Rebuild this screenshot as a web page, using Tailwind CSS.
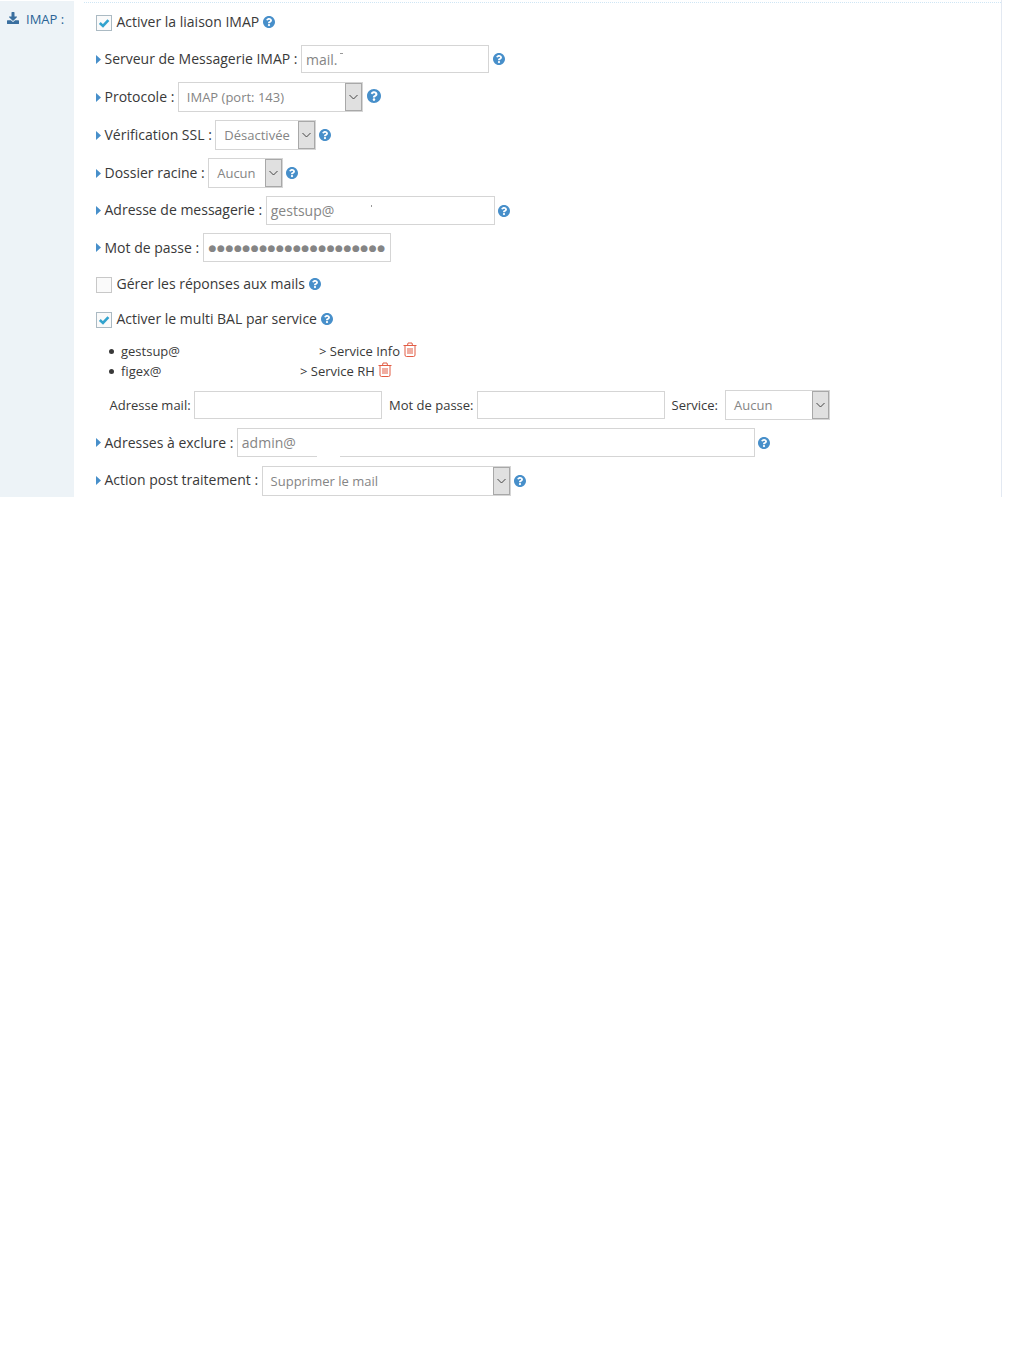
<!DOCTYPE html>
<html lang="fr">
<head>
<meta charset="utf-8">
<title>IMAP</title>
<script src="https://cdn.jsdelivr.net/npm/@tailwindcss/browser@4"></script>
</head>
<body class="bg-white font-['Open_Sans',sans-serif] text-[14px] text-[#393939]">
<div class="flex h-[497px] w-[1002px] overflow-hidden">
  <aside class="w-[74px] shrink-0 bg-[#edf3f7] pt-[11px] pl-[7px] flex items-start gap-[7px] text-[#2a6496] text-[13px] leading-[15px] border-t border-white">
    <svg class="w-[12px] h-[12px] mt-[0px] fill-[#3a6f9f]" viewBox="0 0 512 512"><path d="M216 0h80c13.3 0 24 10.7 24 24v168h87.7c17.8 0 26.7 21.5 14.1 34.1L269.7 378.3c-7.5 7.5-19.8 7.5-27.3 0L90.1 226.1c-12.6-12.6-3.7-34.1 14.1-34.1H192V24c0-13.3 10.7-24 24-24zm296 376v112c0 13.3-10.7 24-24 24H24c-13.3 0-24-10.7-24-24V376c0-13.3 10.7-24 24-24h146.7l49 49c20.1 20.1 52.5 20.1 72.6 0l49-49H488c13.3 0 24 10.7 24 24z"/></svg>
    <span>IMAP :</span>
  </aside>
  <main class="flex-1 pl-[10px] border-r border-[#e3e9f2]">
    <div class="h-[8px] border-t border-dotted border-[#cfe6f5] mt-[2px] -mb-[2px]"></div>
    <div class="pl-[12px] flex flex-col">
      <!-- checkbox -->
      <div class="h-[28px] flex items-center">
        <span class="w-[16px] h-[16px] mr-[4.5px] mt-[1px] border border-[#abbac3] bg-[#fafafa] flex items-center justify-center"><svg class="w-[12px] h-[12px]" viewBox="0 0 12 12"><path d="M1.8 6 L5 9 L10.4 3.2" fill="none" stroke="#32a3ce" stroke-width="2.6"/></svg></span>
        <span class="pb-[2px]">Activer la liaison IMAP</span>
        <svg class="w-[12px] h-[12px] ml-[4px] fill-[#478fca]" viewBox="8 8 496 496"><path d="M504 256c0 136.997-111.043 248-248 248S8 392.997 8 256C8 119.083 119.043 8 256 8s248 111.083 248 248zM262.655 90c-54.497 0-89.255 22.957-116.549 63.758-3.536 5.286-2.353 12.415 2.715 16.258l34.699 26.31c5.205 3.947 12.621 3.008 16.665-2.122 17.864-22.658 30.113-35.797 57.303-35.797 20.429 0 45.698 13.148 45.698 32.958 0 14.976-12.363 22.667-32.534 33.976C247.128 238.528 216 254.941 216 296v4c0 6.627 5.373 12 12 12h56c6.627 0 12-5.373 12-12v-1.333c0-28.462 83.186-29.647 83.186-106.667 0-58.002-60.165-102-116.531-102zM256 338c-25.365 0-46 20.635-46 46 0 25.364 20.635 46 46 46s46-20.636 46-46c0-25.365-20.635-46-46-46z"/></svg>
      </div>
      <!-- serveur -->
      <div class="h-[28px] mt-[9px] flex items-center">
        <svg class="w-[5px] h-[9px] mr-[3.5px] fill-[#478fca]" viewBox="0 0 5 9"><path d="M0 0 L5 4.5 L0 9 Z"/></svg>
        <span class="pb-[2px]">Serveur de Messagerie IMAP :</span>
        <div class="relative w-[188px] h-[28px] ml-[3.5px] border border-[#d5d5d5] bg-white pl-[4px] leading-[28px] text-[#858585]">mail.<span class="absolute left-[38px] top-[7px] w-[3px] h-px bg-[#999]"></span></div>
        <svg class="w-[12px] h-[12px] ml-[3.5px] fill-[#478fca]" viewBox="8 8 496 496"><path d="M504 256c0 136.997-111.043 248-248 248S8 392.997 8 256C8 119.083 119.043 8 256 8s248 111.083 248 248zM262.655 90c-54.497 0-89.255 22.957-116.549 63.758-3.536 5.286-2.353 12.415 2.715 16.258l34.699 26.31c5.205 3.947 12.621 3.008 16.665-2.122 17.864-22.658 30.113-35.797 57.303-35.797 20.429 0 45.698 13.148 45.698 32.958 0 14.976-12.363 22.667-32.534 33.976C247.128 238.528 216 254.941 216 296v4c0 6.627 5.373 12 12 12h56c6.627 0 12-5.373 12-12v-1.333c0-28.462 83.186-29.647 83.186-106.667 0-58.002-60.165-102-116.531-102zM256 338c-25.365 0-46 20.635-46 46 0 25.364 20.635 46 46 46s46-20.636 46-46c0-25.365-20.635-46-46-46z"/></svg>
      </div>
      <!-- protocole -->
      <div class="h-[30px] mt-[9px] flex items-center">
        <svg class="w-[5px] h-[9px] mr-[3.5px] fill-[#478fca]" viewBox="0 0 5 9"><path d="M0 0 L5 4.5 L0 9 Z"/></svg>
        <span class="pb-[2px]">Protocole :</span>
        <div class="flex w-[185px] h-[30px] ml-[3.5px] border border-[#d5d5d5] bg-white">
          <span class="flex-1 pl-[8px] leading-[29px] text-[13px] text-[#858585]">IMAP (port: 143)</span>
          <span class="w-[17px] h-full border border-[#a8a8a8] bg-[#e0e0e0] flex items-center justify-center"><svg class="w-[9px] h-[6px]" viewBox="0 0 9 6"><path d="M0.5 1 L4.5 5 L8.5 1" fill="none" stroke="#444" stroke-width="1"/></svg></span>
        </div>
        <svg class="w-[14px] h-[14px] ml-[4px] mb-[2px] fill-[#478fca]" viewBox="8 8 496 496"><path d="M504 256c0 136.997-111.043 248-248 248S8 392.997 8 256C8 119.083 119.043 8 256 8s248 111.083 248 248zM262.655 90c-54.497 0-89.255 22.957-116.549 63.758-3.536 5.286-2.353 12.415 2.715 16.258l34.699 26.31c5.205 3.947 12.621 3.008 16.665-2.122 17.864-22.658 30.113-35.797 57.303-35.797 20.429 0 45.698 13.148 45.698 32.958 0 14.976-12.363 22.667-32.534 33.976C247.128 238.528 216 254.941 216 296v4c0 6.627 5.373 12 12 12h56c6.627 0 12-5.373 12-12v-1.333c0-28.462 83.186-29.647 83.186-106.667 0-58.002-60.165-102-116.531-102zM256 338c-25.365 0-46 20.635-46 46 0 25.364 20.635 46 46 46s46-20.636 46-46c0-25.365-20.635-46-46-46z"/></svg>
      </div>
      <!-- ssl -->
      <div class="h-[30px] mt-[8px] flex items-center">
        <svg class="w-[5px] h-[9px] mr-[3.5px] fill-[#478fca]" viewBox="0 0 5 9"><path d="M0 0 L5 4.5 L0 9 Z"/></svg>
        <span class="pb-[2px]">Vérification SSL :</span>
        <div class="flex w-[101px] h-[30px] ml-[3.5px] border border-[#d5d5d5] bg-white">
          <span class="flex-1 pl-[8px] leading-[29px] text-[13px] text-[#858585]">Désactivée</span>
          <span class="w-[17px] h-full border border-[#a8a8a8] bg-[#e0e0e0] flex items-center justify-center"><svg class="w-[9px] h-[6px]" viewBox="0 0 9 6"><path d="M0.5 1 L4.5 5 L8.5 1" fill="none" stroke="#444" stroke-width="1"/></svg></span>
        </div>
        <svg class="w-[12px] h-[12px] ml-[3px] fill-[#478fca]" viewBox="8 8 496 496"><path d="M504 256c0 136.997-111.043 248-248 248S8 392.997 8 256C8 119.083 119.043 8 256 8s248 111.083 248 248zM262.655 90c-54.497 0-89.255 22.957-116.549 63.758-3.536 5.286-2.353 12.415 2.715 16.258l34.699 26.31c5.205 3.947 12.621 3.008 16.665-2.122 17.864-22.658 30.113-35.797 57.303-35.797 20.429 0 45.698 13.148 45.698 32.958 0 14.976-12.363 22.667-32.534 33.976C247.128 238.528 216 254.941 216 296v4c0 6.627 5.373 12 12 12h56c6.627 0 12-5.373 12-12v-1.333c0-28.462 83.186-29.647 83.186-106.667 0-58.002-60.165-102-116.531-102zM256 338c-25.365 0-46 20.635-46 46 0 25.364 20.635 46 46 46s46-20.636 46-46c0-25.365-20.635-46-46-46z"/></svg>
      </div>
      <!-- dossier -->
      <div class="h-[30px] mt-[8px] flex items-center">
        <svg class="w-[5px] h-[9px] mr-[3.5px] fill-[#478fca]" viewBox="0 0 5 9"><path d="M0 0 L5 4.5 L0 9 Z"/></svg>
        <span class="pb-[2px]">Dossier racine :</span>
        <div class="flex w-[75px] h-[30px] ml-[3.5px] border border-[#d5d5d5] bg-white">
          <span class="flex-1 pl-[8px] leading-[29px] text-[13px] text-[#858585]">Aucun</span>
          <span class="w-[17px] h-full border border-[#a8a8a8] bg-[#e0e0e0] flex items-center justify-center"><svg class="w-[9px] h-[6px]" viewBox="0 0 9 6"><path d="M0.5 1 L4.5 5 L8.5 1" fill="none" stroke="#444" stroke-width="1"/></svg></span>
        </div>
        <svg class="w-[12px] h-[12px] ml-[3px] fill-[#478fca]" viewBox="8 8 496 496"><path d="M504 256c0 136.997-111.043 248-248 248S8 392.997 8 256C8 119.083 119.043 8 256 8s248 111.083 248 248zM262.655 90c-54.497 0-89.255 22.957-116.549 63.758-3.536 5.286-2.353 12.415 2.715 16.258l34.699 26.31c5.205 3.947 12.621 3.008 16.665-2.122 17.864-22.658 30.113-35.797 57.303-35.797 20.429 0 45.698 13.148 45.698 32.958 0 14.976-12.363 22.667-32.534 33.976C247.128 238.528 216 254.941 216 296v4c0 6.627 5.373 12 12 12h56c6.627 0 12-5.373 12-12v-1.333c0-28.462 83.186-29.647 83.186-106.667 0-58.002-60.165-102-116.531-102zM256 338c-25.365 0-46 20.635-46 46 0 25.364 20.635 46 46 46s46-20.636 46-46c0-25.365-20.635-46-46-46z"/></svg>
      </div>
      <!-- adresse -->
      <div class="h-[29px] mt-[8px] flex items-center">
        <svg class="w-[5px] h-[9px] mr-[3.5px] fill-[#478fca]" viewBox="0 0 5 9"><path d="M0 0 L5 4.5 L0 9 Z"/></svg>
        <span class="pb-[2px]">Adresse de messagerie :</span>
        <div class="relative w-[229px] h-[29px] ml-[3.5px] border border-[#d5d5d5] bg-white pl-[4px] leading-[28px] text-[#858585]">gestsup@<span class="absolute left-[104px] top-[8px] w-px h-[2px] bg-[#999]"></span></div>
        <svg class="w-[12px] h-[12px] ml-[3.5px] fill-[#478fca]" viewBox="8 8 496 496"><path d="M504 256c0 136.997-111.043 248-248 248S8 392.997 8 256C8 119.083 119.043 8 256 8s248 111.083 248 248zM262.655 90c-54.497 0-89.255 22.957-116.549 63.758-3.536 5.286-2.353 12.415 2.715 16.258l34.699 26.31c5.205 3.947 12.621 3.008 16.665-2.122 17.864-22.658 30.113-35.797 57.303-35.797 20.429 0 45.698 13.148 45.698 32.958 0 14.976-12.363 22.667-32.534 33.976C247.128 238.528 216 254.941 216 296v4c0 6.627 5.373 12 12 12h56c6.627 0 12-5.373 12-12v-1.333c0-28.462 83.186-29.647 83.186-106.667 0-58.002-60.165-102-116.531-102zM256 338c-25.365 0-46 20.635-46 46 0 25.364 20.635 46 46 46s46-20.636 46-46c0-25.365-20.635-46-46-46z"/></svg>
      </div>
      <!-- mot de passe -->
      <div class="h-[29px] mt-[8px] flex items-center">
        <svg class="w-[5px] h-[9px] mr-[3.5px] fill-[#478fca]" viewBox="0 0 5 9"><path d="M0 0 L5 4.5 L0 9 Z"/></svg>
        <span>Mot de passe :</span>
        <div class="w-[188px] h-[29px] ml-[3.5px] border border-[#d5d5d5] bg-white pl-[5px] font-['DejaVu_Sans',sans-serif] text-[9px] tracking-[0.58px] leading-[29px] text-[#858585] whitespace-nowrap">●●●●●●●●●●●●●●●●●●●●●</div>
      </div>
      <!-- gérer -->
      <div class="h-[28px] mt-[8px] flex items-center">
        <span class="w-[16px] h-[16px] mr-[4.5px] mt-[1px] border border-[#c8c8c8] bg-[#fafafa]"></span>
        <span class="pb-[2px]">Gérer les réponses aux mails</span>
        <svg class="w-[12px] h-[12px] ml-[4px] fill-[#478fca]" viewBox="8 8 496 496"><path d="M504 256c0 136.997-111.043 248-248 248S8 392.997 8 256C8 119.083 119.043 8 256 8s248 111.083 248 248zM262.655 90c-54.497 0-89.255 22.957-116.549 63.758-3.536 5.286-2.353 12.415 2.715 16.258l34.699 26.31c5.205 3.947 12.621 3.008 16.665-2.122 17.864-22.658 30.113-35.797 57.303-35.797 20.429 0 45.698 13.148 45.698 32.958 0 14.976-12.363 22.667-32.534 33.976C247.128 238.528 216 254.941 216 296v4c0 6.627 5.373 12 12 12h56c6.627 0 12-5.373 12-12v-1.333c0-28.462 83.186-29.647 83.186-106.667 0-58.002-60.165-102-116.531-102zM256 338c-25.365 0-46 20.635-46 46 0 25.364 20.635 46 46 46s46-20.636 46-46c0-25.365-20.635-46-46-46z"/></svg>
      </div>
      <!-- multi bal -->
      <div class="h-[28px] mt-[7px] flex items-center">
        <span class="w-[16px] h-[16px] mr-[4.5px] mt-[1px] border border-[#abbac3] bg-[#fafafa] flex items-center justify-center"><svg class="w-[12px] h-[12px]" viewBox="0 0 12 12"><path d="M1.8 6 L5 9 L10.4 3.2" fill="none" stroke="#32a3ce" stroke-width="2.6"/></svg></span>
        <span class="pb-[2px]">Activer le multi BAL par service</span>
        <svg class="w-[12px] h-[12px] ml-[4px] fill-[#478fca]" viewBox="8 8 496 496"><path d="M504 256c0 136.997-111.043 248-248 248S8 392.997 8 256C8 119.083 119.043 8 256 8s248 111.083 248 248zM262.655 90c-54.497 0-89.255 22.957-116.549 63.758-3.536 5.286-2.353 12.415 2.715 16.258l34.699 26.31c5.205 3.947 12.621 3.008 16.665-2.122 17.864-22.658 30.113-35.797 57.303-35.797 20.429 0 45.698 13.148 45.698 32.958 0 14.976-12.363 22.667-32.534 33.976C247.128 238.528 216 254.941 216 296v4c0 6.627 5.373 12 12 12h56c6.627 0 12-5.373 12-12v-1.333c0-28.462 83.186-29.647 83.186-106.667 0-58.002-60.165-102-116.531-102zM256 338c-25.365 0-46 20.635-46 46 0 25.364 20.635 46 46 46s46-20.636 46-46c0-25.365-20.635-46-46-46z"/></svg>
      </div>
      <!-- liste -->
      <ul class="h-[40px] mt-[8px] pl-[13px] text-[13px]">
        <li class="h-[20px] flex items-center">
          <span class="w-[5px] h-[5px] rounded-full bg-[#393939] mr-[7px]"></span>
          <span class="w-[198px] pt-[2px]">gestsup@</span>
          <span class="pt-[2px]">&gt; Service Info</span>
          <svg class="w-[14px] h-[15px] ml-[3px] -mt-[3px]" viewBox="0 0 14 15" fill="none" stroke="#e25d45" stroke-width="1"><path d="M0.5 3.5 H13.5 M2 3.5 V13 Q2 14.5 3.5 14.5 H10.5 Q12 14.5 12 13 V3.5 M4.5 3.5 L5 1 H9 L9.5 3.5 M5 6 V12 M7 6 V12 M9 6 V12"/></svg>
        </li>
        <li class="h-[20px] flex items-center">
          <span class="w-[5px] h-[5px] rounded-full bg-[#393939] mr-[7px]"></span>
          <span class="w-[179px] pt-[2px]">figex@</span>
          <span class="pt-[2px]">&gt; Service RH</span>
          <svg class="w-[14px] h-[15px] ml-[3px] -mt-[3px]" viewBox="0 0 14 15" fill="none" stroke="#e25d45" stroke-width="1"><path d="M0.5 3.5 H13.5 M2 3.5 V13 Q2 14.5 3.5 14.5 H10.5 Q12 14.5 12 13 V3.5 M4.5 3.5 L5 1 H9 L9.5 3.5 M5 6 V12 M7 6 V12 M9 6 V12"/></svg>
        </li>
      </ul>
      <!-- ajout -->
      <div class="h-[30px] mt-[9px] pl-[13.5px] flex items-center text-[13px]">
        <span class="pt-[2px]">Adresse mail:</span>
        <input class="w-[188px] h-[28px] ml-[3.5px] border border-[#d5d5d5] bg-white">
        <span class="ml-[7px] pt-[2px]">Mot de passe:</span>
        <input class="w-[188px] h-[28px] ml-[3px] border border-[#d5d5d5] bg-white">
        <span class="ml-[7px] pt-[2px]">Service:</span>
        <div class="flex w-[105px] h-[30px] ml-[7px] border border-[#d5d5d5] bg-white">
          <span class="flex-1 pl-[8px] leading-[29px] text-[13px] text-[#858585]">Aucun</span>
          <span class="w-[17px] h-full border border-[#a8a8a8] bg-[#e0e0e0] flex items-center justify-center"><svg class="w-[9px] h-[6px]" viewBox="0 0 9 6"><path d="M0.5 1 L4.5 5 L8.5 1" fill="none" stroke="#444" stroke-width="1"/></svg></span>
        </div>
      </div>
      <!-- exclure -->
      <div class="h-[29px] mt-[8px] flex items-center">
        <svg class="w-[5px] h-[9px] mr-[3.5px] fill-[#478fca]" viewBox="0 0 5 9"><path d="M0 0 L5 4.5 L0 9 Z"/></svg>
        <span>Adresses à exclure :</span>
        <div class="relative w-[518px] h-[29px] ml-[3.5px] border border-[#d5d5d5] bg-white pl-[4px] leading-[27px] text-[#858585]">admin@<span class="absolute left-[79px] -bottom-px w-[23px] h-px bg-white"></span></div>
        <svg class="w-[12px] h-[12px] ml-[3.5px] fill-[#478fca]" viewBox="8 8 496 496"><path d="M504 256c0 136.997-111.043 248-248 248S8 392.997 8 256C8 119.083 119.043 8 256 8s248 111.083 248 248zM262.655 90c-54.497 0-89.255 22.957-116.549 63.758-3.536 5.286-2.353 12.415 2.715 16.258l34.699 26.31c5.205 3.947 12.621 3.008 16.665-2.122 17.864-22.658 30.113-35.797 57.303-35.797 20.429 0 45.698 13.148 45.698 32.958 0 14.976-12.363 22.667-32.534 33.976C247.128 238.528 216 254.941 216 296v4c0 6.627 5.373 12 12 12h56c6.627 0 12-5.373 12-12v-1.333c0-28.462 83.186-29.647 83.186-106.667 0-58.002-60.165-102-116.531-102zM256 338c-25.365 0-46 20.635-46 46 0 25.364 20.635 46 46 46s46-20.636 46-46c0-25.365-20.635-46-46-46z"/></svg>
      </div>
      <!-- action -->
      <div class="h-[30px] mt-[9px] flex items-center">
        <svg class="w-[5px] h-[9px] mr-[3.5px] mb-[2px] fill-[#478fca]" viewBox="0 0 5 9"><path d="M0 0 L5 4.5 L0 9 Z"/></svg>
        <span class="pb-[4px]">Action post traitement :</span>
        <div class="flex w-[249px] h-[30px] ml-[3.5px] border border-[#d5d5d5] bg-white">
          <span class="flex-1 pl-[8px] leading-[29px] text-[13px] text-[#858585]">Supprimer le mail</span>
          <span class="w-[17px] h-full border border-[#a8a8a8] bg-[#e0e0e0] flex items-center justify-center"><svg class="w-[9px] h-[6px]" viewBox="0 0 9 6"><path d="M0.5 1 L4.5 5 L8.5 1" fill="none" stroke="#444" stroke-width="1"/></svg></span>
        </div>
        <svg class="w-[12px] h-[12px] ml-[3px] fill-[#478fca]" viewBox="8 8 496 496"><path d="M504 256c0 136.997-111.043 248-248 248S8 392.997 8 256C8 119.083 119.043 8 256 8s248 111.083 248 248zM262.655 90c-54.497 0-89.255 22.957-116.549 63.758-3.536 5.286-2.353 12.415 2.715 16.258l34.699 26.31c5.205 3.947 12.621 3.008 16.665-2.122 17.864-22.658 30.113-35.797 57.303-35.797 20.429 0 45.698 13.148 45.698 32.958 0 14.976-12.363 22.667-32.534 33.976C247.128 238.528 216 254.941 216 296v4c0 6.627 5.373 12 12 12h56c6.627 0 12-5.373 12-12v-1.333c0-28.462 83.186-29.647 83.186-106.667 0-58.002-60.165-102-116.531-102zM256 338c-25.365 0-46 20.635-46 46 0 25.364 20.635 46 46 46s46-20.636 46-46c0-25.365-20.635-46-46-46z"/></svg>
      </div>
    </div>
  </main>
</div>
<div class="h-[859px]"></div>
</body>
</html>
